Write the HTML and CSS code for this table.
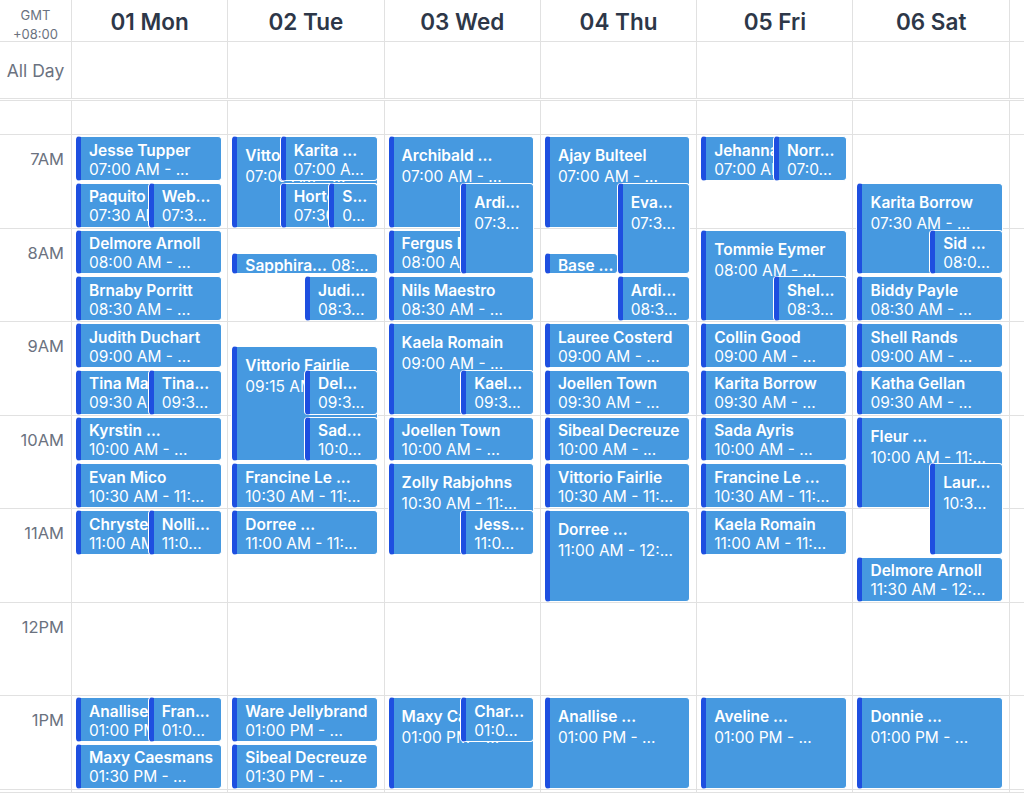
FILE: index.html
```html
<!DOCTYPE html>
<html lang="en">
<head>
<meta charset="utf-8">
<title>Week calendar</title>
<link rel="stylesheet" href="styles.css">
</head>
<body>
<div class="cal">
  <div class="grid head">
    <div class="cell tz"><span>GMT</span><span>+08:00</span></div>
    <div class="cell dname">01 Mon</div>
    <div class="cell dname">02 Tue</div>
    <div class="cell dname">03 Wed</div>
    <div class="cell dname">04 Thu</div>
    <div class="cell dname">05 Fri</div>
    <div class="cell dname">06 Sat</div>
    <div class="cell dname">07 Sun</div>
  </div>
  <div class="grid allday">
    <div class="cell alllabel">All Day</div>
    <div class="cell"></div><div class="cell"></div><div class="cell"></div><div class="cell"></div>
    <div class="cell"></div><div class="cell"></div><div class="cell"></div>
  </div>
  <div class="grid body">
    <div class="col gut">
      <div class="pre"></div>
      <div class="hr">7AM</div>
      <div class="hr">8AM</div>
      <div class="hr">9AM</div>
      <div class="hr">10AM</div>
      <div class="hr">11AM</div>
      <div class="hr">12PM</div>
      <div class="hr">1PM</div>
      <div class="hr">2PM</div>
    </div>

    <!-- Mon -->
    <div class="col day">
      <div class="pre"></div><div class="hr"></div><div class="hr"></div><div class="hr"></div><div class="hr"></div><div class="hr"></div><div class="hr"></div><div class="hr"></div><div class="hr"></div>
      <div class="ev" style="--s:0"><b>Jesse Tupper</b><span>07:00 AM - ...</span></div>
      <div class="ev" style="--s:.5"><b>Paquito ...</b><span>07:30 AM - ...</span></div>
      <div class="ev" style="--s:.5;--x:.5;--w:.5"><b>Web...</b><span>07:3...</span></div>
      <div class="ev" style="--s:1"><b>Delmore Arnoll</b><span>08:00 AM - ...</span></div>
      <div class="ev" style="--s:1.5"><b>Brnaby Porritt</b><span>08:30 AM - ...</span></div>
      <div class="ev" style="--s:2"><b>Judith Duchart</b><span>09:00 AM - ...</span></div>
      <div class="ev" style="--s:2.5"><b>Tina Marie ...</b><span>09:30 AM - ...</span></div>
      <div class="ev" style="--s:2.5;--x:.5;--w:.5"><b>Tina...</b><span>09:3...</span></div>
      <div class="ev" style="--s:3"><b>Kyrstin ...</b><span>10:00 AM - ...</span></div>
      <div class="ev" style="--s:3.5"><b>Evan Mico</b><span>10:30 AM - 11:...</span></div>
      <div class="ev" style="--s:4"><b>Chrystel ...</b><span>11:00 AM - ...</span></div>
      <div class="ev" style="--s:4;--x:.5;--w:.5"><b>Nolli...</b><span>11:0...</span></div>
      <div class="ev" style="--s:6"><b>Anallise ...</b><span>01:00 PM - ...</span></div>
      <div class="ev" style="--s:6;--x:.5;--w:.5"><b>Fran...</b><span>01:0...</span></div>
      <div class="ev" style="--s:6.5"><b>Maxy Caesmans</b><span>01:30 PM - ...</span></div>
    </div>

    <!-- Tue -->
    <div class="col day">
      <div class="pre"></div><div class="hr"></div><div class="hr"></div><div class="hr"></div><div class="hr"></div><div class="hr"></div><div class="hr"></div><div class="hr"></div><div class="hr"></div>
      <div class="ev l" style="--s:0;--d:1"><b>Vittorio ...</b><span>07:00 AM - ...</span></div>
      <div class="ev" style="--s:0;--x:.3333;--w:.6667"><b>Karita ...</b><span>07:00 A...</span></div>
      <div class="ev" style="--s:.5;--x:.3333;--w:.6667"><b>Hortensia ...</b><span>07:30 AM - ...</span></div>
      <div class="ev" style="--s:.5;--x:.6667;--w:.3333"><b>S...</b><span>0...</span></div>
      <div class="ev t" style="--s:1.25;--d:.25"><b>Sapphira...</b> <span>08:...</span></div>
      <div class="ev" style="--s:1.5;--x:.5;--w:.5"><b>Judi...</b><span>08:3...</span></div>
      <div class="ev l" style="--s:2.25;--d:1.25"><b>Vittorio Fairlie</b><span>09:15 AM - ...</span></div>
      <div class="ev" style="--s:2.5;--x:.5;--w:.5"><b>Del...</b><span>09:3...</span></div>
      <div class="ev" style="--s:3;--x:.5;--w:.5"><b>Sad...</b><span>10:0...</span></div>
      <div class="ev" style="--s:3.5"><b>Francine Le ...</b><span>10:30 AM - 11:...</span></div>
      <div class="ev" style="--s:4"><b>Dorree ...</b><span>11:00 AM - 11:...</span></div>
      <div class="ev" style="--s:6"><b>Ware Jellybrand</b><span>01:00 PM - ...</span></div>
      <div class="ev" style="--s:6.5"><b>Sibeal Decreuze</b><span>01:30 PM - ...</span></div>
    </div>

    <!-- Wed -->
    <div class="col day">
      <div class="pre"></div><div class="hr"></div><div class="hr"></div><div class="hr"></div><div class="hr"></div><div class="hr"></div><div class="hr"></div><div class="hr"></div><div class="hr"></div>
      <div class="ev l" style="--s:0;--d:1"><b>Archibald ...</b><span>07:00 AM - ...</span></div>
      <div class="ev" style="--s:1"><b>Fergus Eaden</b><span>08:00 AM - ...</span></div>
      <div class="ev l" style="--s:.5;--d:1;--x:.5;--w:.5"><b>Ardi...</b><span>07:3...</span></div>
      <div class="ev" style="--s:1.5"><b>Nils Maestro</b><span>08:30 AM - ...</span></div>
      <div class="ev l" style="--s:2;--d:1"><b>Kaela Romain</b><span>09:00 AM - ...</span></div>
      <div class="ev" style="--s:2.5;--x:.5;--w:.5"><b>Kael...</b><span>09:3...</span></div>
      <div class="ev" style="--s:3"><b>Joellen Town</b><span>10:00 AM - ...</span></div>
      <div class="ev l" style="--s:3.5;--d:1"><b>Zolly Rabjohns</b><span>10:30 AM - 11:...</span></div>
      <div class="ev" style="--s:4;--x:.5;--w:.5"><b>Jess...</b><span>11:0...</span></div>
      <div class="ev l" style="--s:6;--d:1"><b>Maxy Caesmans</b><span>01:00 PM - ...</span></div>
      <div class="ev" style="--s:6;--x:.5;--w:.5"><b>Char...</b><span>01:0...</span></div>
    </div>

    <!-- Thu -->
    <div class="col day">
      <div class="pre"></div><div class="hr"></div><div class="hr"></div><div class="hr"></div><div class="hr"></div><div class="hr"></div><div class="hr"></div><div class="hr"></div><div class="hr"></div>
      <div class="ev l" style="--s:0;--d:1"><b>Ajay Bulteel</b><span>07:00 AM - ...</span></div>
      <div class="ev l" style="--s:.5;--d:1;--x:.5;--w:.5"><b>Eva...</b><span>07:3...</span></div>
      <div class="ev t" style="--s:1.25;--d:.25;--w:.5"><b>Base ...</b></div>
      <div class="ev" style="--s:1.5;--x:.5;--w:.5"><b>Ardi...</b><span>08:3...</span></div>
      <div class="ev" style="--s:2"><b>Lauree Costerd</b><span>09:00 AM - ...</span></div>
      <div class="ev" style="--s:2.5"><b>Joellen Town</b><span>09:30 AM - ...</span></div>
      <div class="ev" style="--s:3"><b>Sibeal Decreuze</b><span>10:00 AM - ...</span></div>
      <div class="ev" style="--s:3.5"><b>Vittorio Fairlie</b><span>10:30 AM - 11:...</span></div>
      <div class="ev l" style="--s:4;--d:1"><b>Dorree ...</b><span>11:00 AM - 12:...</span></div>
      <div class="ev l" style="--s:6;--d:1"><b>Anallise ...</b><span>01:00 PM - ...</span></div>
    </div>

    <!-- Fri -->
    <div class="col day">
      <div class="pre"></div><div class="hr"></div><div class="hr"></div><div class="hr"></div><div class="hr"></div><div class="hr"></div><div class="hr"></div><div class="hr"></div><div class="hr"></div>
      <div class="ev" style="--s:0"><b>Jehanna ...</b><span>07:00 AM - ...</span></div>
      <div class="ev" style="--s:0;--x:.5;--w:.5"><b>Norr...</b><span>07:0...</span></div>
      <div class="ev l" style="--s:1;--d:1"><b>Tommie Eymer</b><span>08:00 AM - ...</span></div>
      <div class="ev" style="--s:1.5;--x:.5;--w:.5"><b>Shel...</b><span>08:3...</span></div>
      <div class="ev" style="--s:2"><b>Collin Good</b><span>09:00 AM - ...</span></div>
      <div class="ev" style="--s:2.5"><b>Karita Borrow</b><span>09:30 AM - ...</span></div>
      <div class="ev" style="--s:3"><b>Sada Ayris</b><span>10:00 AM - ...</span></div>
      <div class="ev" style="--s:3.5"><b>Francine Le ...</b><span>10:30 AM - 11:...</span></div>
      <div class="ev" style="--s:4"><b>Kaela Romain</b><span>11:00 AM - 11:...</span></div>
      <div class="ev l" style="--s:6;--d:1"><b>Aveline ...</b><span>01:00 PM - ...</span></div>
    </div>

    <!-- Sat -->
    <div class="col day">
      <div class="pre"></div><div class="hr"></div><div class="hr"></div><div class="hr"></div><div class="hr"></div><div class="hr"></div><div class="hr"></div><div class="hr"></div><div class="hr"></div>
      <div class="ev l" style="--s:.5;--d:1"><b>Karita Borrow</b><span>07:30 AM - ...</span></div>
      <div class="ev" style="--s:1;--x:.5;--w:.5"><b>Sid ...</b><span>08:0...</span></div>
      <div class="ev" style="--s:1.5"><b>Biddy Payle</b><span>08:30 AM - ...</span></div>
      <div class="ev" style="--s:2"><b>Shell Rands</b><span>09:00 AM - ...</span></div>
      <div class="ev" style="--s:2.5"><b>Katha Gellan</b><span>09:30 AM - ...</span></div>
      <div class="ev l" style="--s:3;--d:1"><b>Fleur ...</b><span>10:00 AM - 11:...</span></div>
      <div class="ev l" style="--s:3.5;--d:1;--x:.5;--w:.5"><b>Laur...</b><span>10:3...</span></div>
      <div class="ev" style="--s:4.5"><b>Delmore Arnoll</b><span>11:30 AM - 12:...</span></div>
      <div class="ev l" style="--s:6;--d:1"><b>Donnie ...</b><span>01:00 PM - ...</span></div>
    </div>

    <!-- Sun -->
    <div class="col day">
      <div class="pre"></div><div class="hr"></div><div class="hr"></div><div class="hr"></div><div class="hr"></div><div class="hr"></div><div class="hr"></div><div class="hr"></div><div class="hr"></div>
    </div>
  </div>
</div>
</body>
</html>
```

FILE: styles.css
```css
* {
  box-sizing: border-box;
  margin: 0;
  padding: 0;
}

html,
body {
  width: 1024px;
  height: 806px;
  overflow: hidden;
  background: #ffffff;
}

body {
  font-family: Inter, "Noto Sans", "Liberation Sans", sans-serif;
  color: #2d3748;
}

.cal {
  width: 1166px;
}

.grid {
  display: grid;
  grid-template-columns: 72px repeat(7, 156.3px);
}

.cell {
  border-right: 1px solid #e1e1e1;
}

.head {
  height: 42px;
  grid-template-rows: 41px;
  border-bottom: 1px solid #e1e1e1;
}

.head .cell {
  display: flex;
  align-items: center;
  justify-content: center;
  min-height: 0;
}

.head .tz {
  flex-direction: column;
  justify-content: flex-start;
  font-size: 13px;
  line-height: 19px;
  color: #6b7280;
  padding-top: 5.5px;
  overflow: visible;
}

.head .dname {
  font-size: 22.5px;
  font-weight: 600;
  color: #2d3748;
  padding-top: 2px;
}

.allday {
  height: 57px;
  grid-template-rows: 56px;
  border-bottom: 1px solid #e1e1e1;
}

.alllabel {
  display: flex;
  align-items: center;
  justify-content: center;
  font-size: 17.5px;
  color: #6b7280;
  padding-top: 1px;
}

.body {
  margin-top: 1px;
  height: 693px;
  border-top: 1px solid #e1e1e1;
  border-bottom: 1px solid #e1e1e1;
  overflow: hidden;
}

.col {
  position: relative;
  border-right: 1px solid #e1e1e1;
}

.pre {
  height: 34px;
  border-bottom: 1px solid #e1e1e1;
}

.hr {
  height: 93.5px;
  border-bottom: 1px solid #e1e1e1;
}

.gut .hr {
  text-align: right;
  padding: 14px 7px 0 0;
  font-size: 16.5px;
  line-height: 20px;
  color: #6b7280;
}

.ev {
  --x: 0;
  --w: 1;
  --d: .5;
  position: absolute;
  top: calc(35px + var(--s) * 93.5px);
  height: calc(var(--d) * 93.5px - 2px);
  left: calc(4px + var(--x) * 145.5px);
  width: calc(var(--w) * 145.5px);
  background: #4699e0;
  border: 1px solid #ffffff;
  border-left: 5px solid #1e4fe0;
  border-radius: 4px;
  box-shadow: -1px 0 0 0 #ffffff;
  color: #ffffff;
  overflow: hidden;
  white-space: nowrap;
  padding: 3.5px 4px 0 8px;
  font-size: 15.5px;
  line-height: 19px;
}

.ev b {
  display: block;
  font-weight: 600;
}

.ev span {
  display: block;
}

.ev.l {
  padding-top: 8px;
  line-height: 21px;
}

.ev.t {
  padding-top: 2.5px;
  line-height: 19px;
}

.ev.t b,
.ev.t span {
  display: inline;
}
```
